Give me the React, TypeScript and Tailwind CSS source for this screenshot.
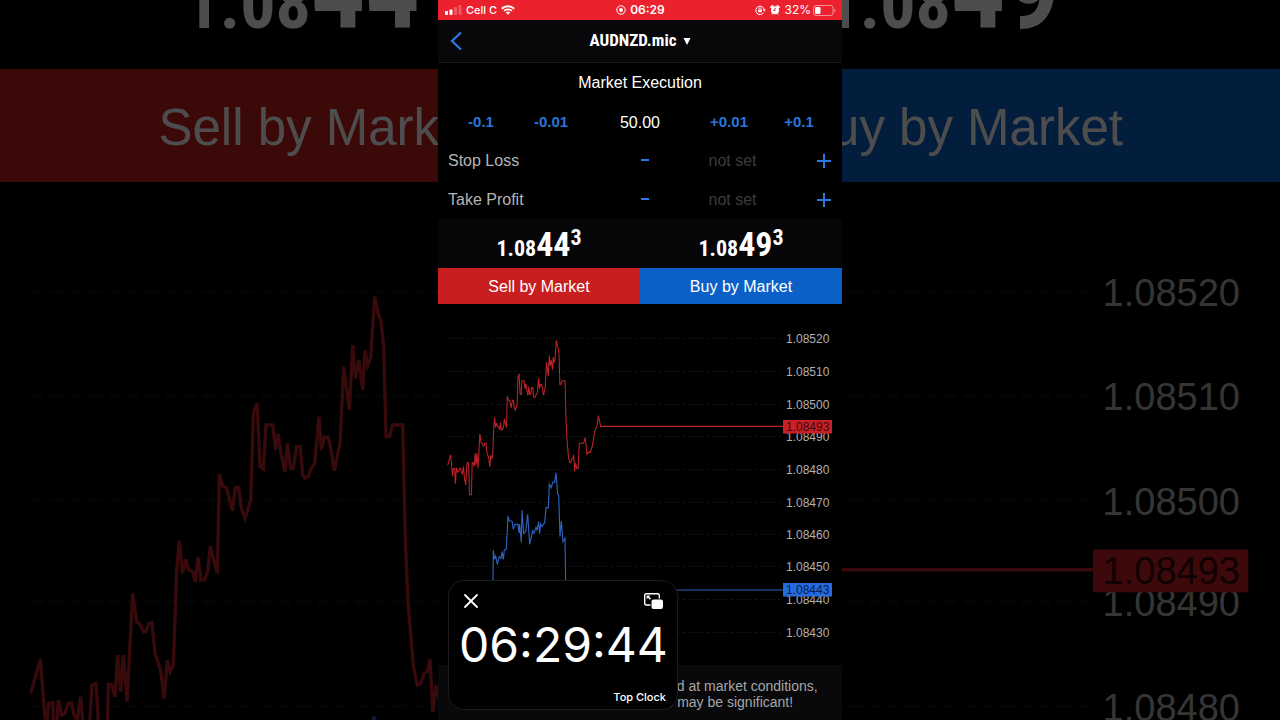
import React, { useState } from "react";
import clsx from "clsx";

interface Tick {
  label: string;
  y: number;
}

const ticks: Tick[] = [
  { label: "1.08520", y: 34 },
  { label: "1.08510", y: 67 },
  { label: "1.08500", y: 100 },
  { label: "1.08490", y: 132 },
  { label: "1.08480", y: 165 },
  { label: "1.08470", y: 198 },
  { label: "1.08460", y: 230 },
  { label: "1.08450", y: 262 },
  { label: "1.08440", y: 295 },
  { label: "1.08430", y: 328 },
];

const askPoints =
  "92,1270 121,1168 134,1330 139,1375 146,1300 158,1298 165,1445 175,1290 185,1335 195,1330 205,1300 214,1298 222,1335 232,1350 242,1280 250,1375 263,1456 276,1245 288,1240 294,1330 299,1548 318,1548 325,1243 335,1245 345,1280 353,1155 362,1265 370,1155 381,1295 398,970 410,1055 420,1062 430,1085 437,1085 446,1060 456,1058 465,1150 482,1200 492,1285 502,1170 510,1205 520,1185 530,900 538,812 547,910 557,868 565,898 578,905 586,935 594,862 603,930 613,930 623,905 631,828 641,870 652,910 658,612 668,648 680,655 697,722 706,652 716,652 724,715 735,745 752,690 760,430 771,400 780,590 790,597 798,465 818,465 827,540 834,492 845,560 855,605 862,520 872,595 880,595 890,530 901,530 908,615 915,625 925,618 933,595 944,580 957,440 964,540 973,500 985,503 994,545 1003,602 1020,520 1031,290 1048,420 1058,225 1066,325 1076,270 1088,360 1095,240 1103,285 1112,262 1124,80 1134,130 1143,155 1151,230 1158,500 1168,500 1178,465 1208,465 1216,820 1225,1010 1240,1190 1252,1245 1262,1240 1272,1210 1282,1205 1290,1168 1298,1325 1308,1245 1318,1295 1331,1301 1343,1060 1384,1060 1400,1003 1416,1165 1426,1146 1448,1146 1467,1085 1489,949 1502,918 1511,895 1524,797 1546,899 3279,899";

const bidPoints =
  "165,785 166,690 169,718 173,708 178,733 184,710 189,715 192,695 196,718 199,690 205,688 210,588 214,603 222,603 226,628 231,613 240,613 243,640 245,613 250,667 252,570 257,640 263,635 269,583 275,673 284,632 288,640 294,622 297,632 302,605 305,640 308,612 312,620 320,608 324,563 331,563 334,492 340,503 344,487 350,487 354,458 359,523 362,525 366,650 370,603 375,665 381,655 383,785 388,960 420,960 450,850 480,810 1035,810";

const TickChart = () => (
  <svg
    viewBox="0 0 404 361"
    className="block w-full shrink-0 font-['Liberation_Sans',Arial,sans-serif]"
    fontSize="12"
  >
    {ticks.map((t) => (
      <g key={t.label}>
        <line
          x1="10"
          x2="343"
          y1={t.y + 0.5}
          y2={t.y + 0.5}
          stroke="#0e0e0e"
          strokeDasharray="4 2"
        />
        <text x="348" y={t.y + 5} fill="#b0b0b0">
          {t.label}
        </text>
      </g>
    ))}
    <g transform="translate(0 27.78) scale(0.10522)" fill="none">
      <polyline points={askPoints} stroke="#bd2329" strokeWidth="10" />
    </g>
    <g transform="translate(0 16) scale(0.33333)" fill="none">
      <polyline points={bidPoints} stroke="#2d62bd" strokeWidth="3.4" />
    </g>
    {/* current ask / bid tags */}
    <rect x="345" y="116" width="49" height="13.5" fill="#c92027" />
    <text x="348" y="127" fill="#3c0608">
      1.08493
    </text>
    <rect x="345" y="279" width="49" height="13.5" fill="#246bdc" />
    <text x="348" y="290" fill="#081c4a">
      1.08443
    </text>
  </svg>
);

interface QuoteProps {
  base: string;
  pips: string;
  point: string;
  large?: boolean;
}

const Quote = ({ base, pips, point, large }: QuoteProps) => (
  <div
    className={clsx(
      "flex items-baseline justify-center font-['Roboto_Condensed','Liberation_Sans_Narrow',sans-serif] font-bold text-white",
      large ? "text-[70px] leading-none" : "text-[22px] leading-none"
    )}
  >
    <span>{base}</span>
    <span className={large ? "text-[108px]" : "text-[34px] leading-none"}>
      {pips}
    </span>
    <span className="self-start">{point}</span>
  </div>
);

const Backdrop = () => (
  <div
    aria-hidden="true"
    className="absolute inset-0 overflow-hidden opacity-30"
  >
    <div className="grid h-[69px] grid-cols-2 content-end pb-6">
      <Quote base="1.08" pips="44" point="3" large />
      <Quote base="1.08" pips="49" point="3" large />
    </div>
    <div className="grid h-[113px] grid-cols-2 grid-rows-1 text-center text-[51px] leading-[118px] text-white">
      <div className="bg-[#c81e20]">Sell by Market</div>
      <div className="bg-[#0a60c6]">Buy by Market</div>
    </div>
    <TickChart />
  </div>
);

const StatusBar = () => (
  <div className="grid h-5 grid-cols-3 items-center bg-[#eb212e] pr-1.5 pl-[7px] font-[Inter,sans-serif] text-xs text-white">
    <div className="flex items-center gap-1">
      <svg width="17" height="10" viewBox="0 0 17 10" fill="#fff">
        <rect x="0" y="6" width="3" height="4" rx="0.8" />
        <rect x="4.5" y="4.5" width="3" height="5.5" rx="0.8" />
        <rect x="9" y="2" width="3" height="8" rx="0.8" opacity="0.25" />
        <rect x="13.5" y="0" width="3" height="10" rx="0.8" opacity="0.25" />
      </svg>
      <span className="text-[11px] font-medium">Cell C</span>
      <svg width="14" height="10" viewBox="0 0 14 10" fill="#fff">
        <path d="M7 .3C4.4 .3 2 1.3 .2 3l1.3 1.4A8 8 0 0 1 7 2.200a8 8 0 0 1 5.500 2.200L13.800 3A10 10 0 0 0 7 .3Z" />
        <path d="M7 3.400c-1.700 0-3.300.7-4.500 1.800l1.300 1.400A4.700 4.700 0 0 1 7 5.300c1.200 0 2.300.5 3.200 1.300l1.300-1.400A6.600 6.600 0 0 0 7 3.400Z" />
        <path d="M7 6.500c-.9 0-1.700.3-2.300.9L7 9.800l2.300-2.400A3.300 3.300 0 0 0 7 6.500Z" />
      </svg>
    </div>
    <div className="flex items-center justify-center gap-1 font-semibold">
      <svg width="10" height="10" viewBox="0 0 10 10">
        <circle cx="5" cy="5" r="4.2" fill="none" stroke="#fff" />
        <circle cx="5" cy="5" r="1.9" fill="#fff" />
      </svg>
      <span>06:29</span>
    </div>
    <div className="flex items-center justify-end gap-0.5">
      <div className="flex items-center gap-1">
        <svg width="11" height="10" viewBox="0 0 11 10">
          <path
            d="M8.600 7.600A4.200 4.200 0 1 1 9.200 5"
            fill="none"
            stroke="#fff"
          />
          <path d="M7.600 4.600h3.200L9.200 6.700Z" fill="#fff" />
          <rect
            x="3.2"
            y="4.5"
            width="3.6"
            height="2.8"
            rx="0.5"
            fill="#fff"
          />
          <path
            d="M3.900 4.600v-.8a1.100 1.100 0 0 1 2.200 0v.8"
            fill="none"
            stroke="#fff"
            strokeWidth="0.8"
          />
        </svg>
        <svg width="10" height="10" viewBox="0 0 10 10">
          <path
            d="M1 2.200 2.600 .9M9 2.200 7.400 .9"
            stroke="#fff"
            strokeWidth="1.8"
            strokeLinecap="round"
          />
          <path d="m1.800 9.600 1-1.200M8.200 9.600l-1-1.200" stroke="#fff" />
          <circle cx="5" cy="5.2" r="4" fill="#fff" />
          <path d="M5 2.800v2.600H3.200" fill="none" stroke="#eb212e" />
        </svg>
        <span>32%</span>
      </div>
      <svg width="23" height="11" viewBox="0 0 23 11">
        <rect
          x="0.5"
          y="0.5"
          width="19.5"
          height="10"
          rx="2.5"
          fill="none"
          stroke="#fff"
          opacity="0.5"
        />
        <rect x="2" y="2" width="5.5" height="7" rx="1.2" fill="#fff" />
        <path
          d="M21.200 3.800v3.400c.8-.3 1.200-.9 1.200-1.700s-.4-1.400-1.200-1.700Z"
          fill="#fff"
          opacity="0.5"
        />
      </svg>
    </div>
  </div>
);

const StepButton = ({
  label,
  onClick,
}: {
  label: string;
  onClick: () => void;
}) => (
  <button
    type="button"
    onClick={onClick}
    className="w-[70px] shrink-0 text-[15px] font-bold text-[#2a75d8]"
  >
    {label}
  </button>
);

const LevelRow = ({ id, label }: { id: string; label: string }) => {
  const [value, setValue] = useState("");

  const step = (delta: number) => {
    const current = parseFloat(value) || 1.08443;
    setValue((current + delta).toFixed(5));
  };

  return (
    <div className="grid h-[39px] grid-cols-2 items-center">
      <label htmlFor={id} className="pl-2.5 text-[#b4b4b4]">
        {label}
      </label>
      <div className="flex items-center pr-[11px] text-[#2c7ae6]">
        <button
          type="button"
          aria-label={`Decrease ${label}`}
          className="w-3 shrink-0"
          onClick={() => step(-0.00001)}
        >
          <svg width="10" height="14" viewBox="0 0 10 14">
            <path d="M1 6h8" stroke="currentColor" strokeWidth="2" />
          </svg>
        </button>
        <input
          id={id}
          type="text"
          placeholder="not set"
          value={value}
          onChange={(e) => setValue(e.target.value)}
          className="w-full min-w-0 flex-1 bg-transparent pr-1 text-center text-white outline-none placeholder:text-[#3c3c3c]"
        />
        <button
          type="button"
          aria-label={`Increase ${label}`}
          className="w-3.5 shrink-0"
          onClick={() => step(0.00001)}
        >
          <svg width="14" height="14" viewBox="0 0 14 14">
            <path d="M0 7h14M7 0v14" stroke="currentColor" strokeWidth="2" />
          </svg>
        </button>
      </div>
    </div>
  );
};

const FloatingClock = ({ onClose }: { onClose: () => void }) => (
  <div className="absolute bottom-2.5 left-2.5 flex h-[130px] w-[230px] flex-col rounded-2xl border border-[#1b1b1d] bg-black px-2.5 pt-3 pb-1 font-[Inter,sans-serif] text-white">
    <div className="flex items-center justify-between px-1">
      <button type="button" aria-label="Close clock" onClick={onClose}>
        <svg width="16" height="16" viewBox="0 0 16 16">
          <path
            d="M2 2l12 12M14 2 2 14"
            stroke="#fff"
            strokeWidth="1.8"
            strokeLinecap="round"
          />
        </svg>
      </button>
      <button type="button" aria-label="Picture in picture">
        <svg width="19" height="16" viewBox="0 0 19 16">
          <path
            d="M6.500 12H2.200A1.500 1.500 0 0 1 .7 10.500V2.200A1.500 1.500 0 0 1 2.200 .7h11.600a1.500 1.500 0 0 1 1.500 1.500V5.500"
            fill="none"
            stroke="#fff"
            strokeWidth="1.4"
          />
          <path
            d="M2.600 2.600h3.600L5.100 3.700 7 5.600l-1.100 1.100L4 4.800 2.600 6.200Z"
            fill="#fff"
          />
          <rect
            x="7.5"
            y="6.5"
            width="11.5"
            height="9.5"
            rx="2"
            fill="#fff"
          />
        </svg>
      </button>
    </div>
    <time className="mt-3 text-center text-5xl leading-none">06:29:44</time>
    <div className="mt-auto px-px text-right text-[11px] leading-4 font-medium">
      Top Clock
    </div>
  </div>
);

const App = () => {
  const [volume, setVolume] = useState("50.00");
  const [clockOpen, setClockOpen] = useState(true);

  const changeVolume = (delta: number) => {
    const next = Math.max(0, (parseFloat(volume) || 0) + delta);
    setVolume(next.toFixed(2));
  };

  return (
    <div className="relative min-h-screen overflow-hidden bg-black font-['Liberation_Sans',Arial,sans-serif]">
      <Backdrop />
      <div className="relative grid min-h-screen grid-cols-[438fr_404fr_438fr]">
        <main className="relative col-start-2 flex min-w-0 flex-col bg-black text-base text-white">
          <StatusBar />
          <header className="grid h-[43px] grid-cols-[40px_1fr_40px] items-center border-b border-[#18181b] bg-[#08080b]">
            <button type="button" aria-label="Back" className="pl-3">
              <svg width="12" height="20" viewBox="0 0 12 20">
                <path
                  d="M11 1.500 2 10l9 8.500"
                  fill="none"
                  stroke="#2c7ae6"
                  strokeWidth="2.2"
                />
              </svg>
            </button>
            <button
              type="button"
              className="flex items-center justify-center gap-1.5 font-['Roboto_Condensed','Liberation_Sans_Narrow',sans-serif] text-[17px] font-bold"
            >
              AUDNZD.mic
              <svg width="8" height="8" viewBox="0 0 8 8" fill="#fff">
                <path d="M.5 1h7L4 8Z" />
              </svg>
            </button>
          </header>

          <h1 className="h-[39px] text-center leading-[39px]">
            Market Execution
          </h1>
          <div className="flex h-[39px] items-center px-2 pt-0.5">
            <StepButton label="-0.1" onClick={() => changeVolume(-0.1)} />
            <StepButton label="-0.01" onClick={() => changeVolume(-0.01)} />
            <input
              type="text"
              aria-label="Volume"
              value={volume}
              onChange={(e) => setVolume(e.target.value)}
              className="w-full min-w-0 flex-1 bg-transparent text-center outline-none"
            />
            <StepButton label="+0.01" onClick={() => changeVolume(0.01)} />
            <StepButton label="+0.1" onClick={() => changeVolume(0.1)} />
          </div>
          <LevelRow id="stop-loss" label="Stop Loss" />
          <LevelRow id="take-profit" label="Take Profit" />

          <div className="grid h-[49px] grid-cols-2 items-center bg-[#060609]">
            <Quote base="1.08" pips="44" point="3" />
            <Quote base="1.08" pips="49" point="3" />
          </div>
          <div className="grid h-9 grid-cols-2">
            <button type="button" className="bg-[#c81e20] pt-0.5">
              Sell by Market
            </button>
            <button type="button" className="bg-[#0a60c6] pt-0.5">
              Buy by Market
            </button>
          </div>

          <TickChart />

          <p className="flex-1 bg-[#09090b] pt-[13px] pr-5 pb-2 pl-4 text-center text-sm leading-4 text-[#a6a6a8]">
            Attention! The trade will be executed at market conditions,
            difference with requested price may be significant!
          </p>

          {clockOpen && <FloatingClock onClose={() => setClockOpen(false)} />}
        </main>
      </div>
    </div>
  );
};

export default App;
